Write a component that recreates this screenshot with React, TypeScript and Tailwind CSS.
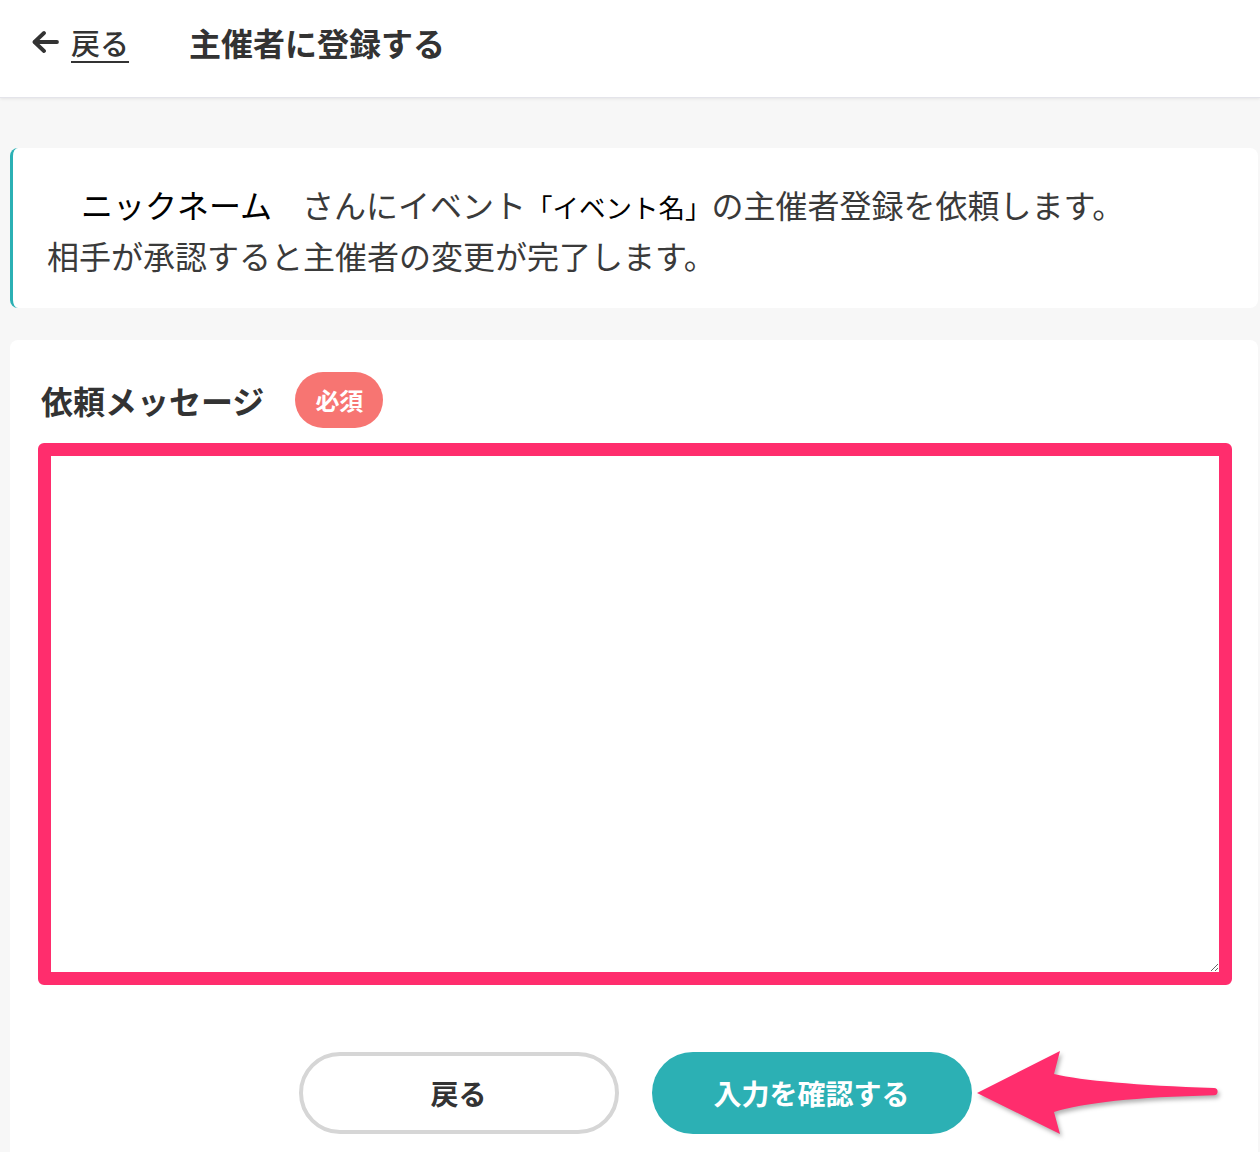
export default function App() {
  return (
    <div className="min-h-[1152px] bg-[#f7f7f7] font-['Noto_Sans_CJK_JP','Noto_Sans',sans-serif] text-[#333]">
      {/* Header */}
      <header className="h-[98px] bg-white border-b border-[#e4e4ea] shadow-[0_1px_3px_rgba(0,0,0,0.08)] pt-[18px]">
        <div className="flex items-center h-[48px] pl-[32px]">
          <a href="#" className="flex items-center text-[#333]">
            <svg width="27" height="24" viewBox="0 0 27 24" fill="none" stroke="#333" strokeWidth="3.8" strokeLinecap="round" strokeLinejoin="round">
              <path d="M12 3 L2.5 12 L12 21" />
              <path d="M3 12 H25" />
            </svg>
            <span className="ml-[12px] text-[29px] font-medium underline underline-offset-[6px] decoration-2 leading-none">戻る</span>
          </a>
          <h1 className="ml-[60px] text-[32px] font-bold leading-none">主催者に登録する</h1>
        </div>
      </header>

      {/* Info */}
      <div className="mt-[50px] ml-[10px] mr-[2px] h-[160px] bg-white rounded-lg border-l-[3px] border-[#2bb0b4] pt-[32px] pl-[34px]">
        <p className="text-[32px] leading-[48px] text-[#3a3a3a]">
          <span className="pl-[34px] pr-[30px] font-normal text-black">ニックネーム</span>
          さんにイベント<span className="text-[26.5px] font-normal text-black">「イベント名」</span>の主催者登録を依頼します。
          <br />
          相手が承認すると主催者の変更が完了します。
        </p>
      </div>

      {/* Form */}
      <div className="mt-[32px] ml-[10px] mr-[2px] bg-white rounded-t-lg pt-[32px] pl-[28px] pr-[26px] pb-[40px]">
        <div className="flex items-center h-[56px]">
          <span className="ml-[3px] text-[32px] font-bold leading-none">依頼メッセージ</span>
          <span className="ml-[31px] w-[88px] h-[56px] rounded-full bg-[#f77572] text-white text-[24px] font-bold flex items-center justify-center">必須</span>
        </div>
        <textarea className="block w-full mt-[15px] h-[542px] border-[13px] border-[#ff2d6d] rounded-[6px] bg-white outline-none" />
        <div className="mt-[67px] flex justify-center gap-[33px]">
          <button className="w-[320px] h-[82px] rounded-full border-4 border-[#d6d6d6] bg-white text-[28px] font-bold text-[#333]">戻る</button>
          <div className="relative">
            <button className="w-[320px] h-[82px] rounded-full bg-[#2cb0b4] text-[28px] font-bold text-white">入力を確認する</button>
            <svg className="absolute left-[315px] top-[-7px] drop-shadow-[2px_3px_2px_rgba(0,0,0,0.3)]" width="260" height="95" viewBox="0 0 260 95">
              <path d="M10 48 L93 6 L87 29 Q130 39 247 43 A3.6 3.6 0 0 1 247 50.2 Q130 53 87 67 L93 89 Z" fill="#ff2d6d" />
            </svg>
          </div>
        </div>
      </div>
    </div>
  );
}
